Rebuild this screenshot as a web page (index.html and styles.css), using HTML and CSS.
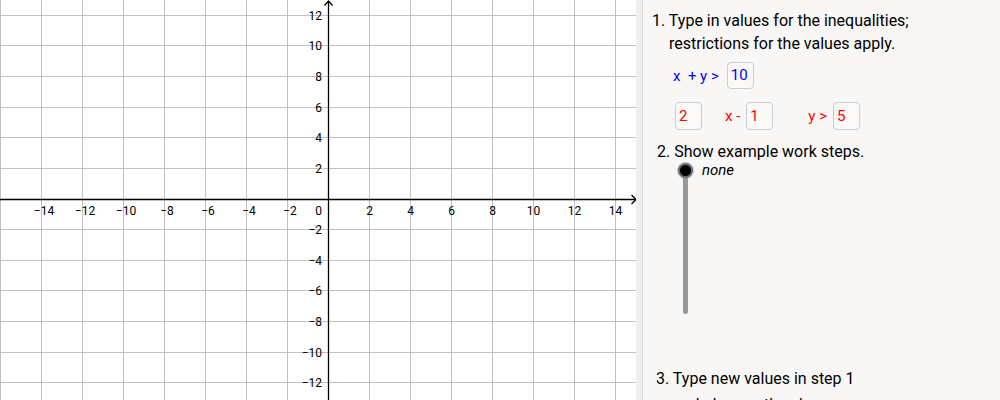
FILE: index.html
```html
<!DOCTYPE html>
<html>
<head>
<meta charset="utf-8">
<link rel="stylesheet" href="styles.css">
</head>
<body>
<div class="app">
  <div class="graph">
    <svg width="636" height="400" viewBox="0 0 636 400" xmlns="http://www.w3.org/2000/svg">
      <g class="grid" stroke="#c0c0c0" stroke-width="1" shape-rendering="crispEdges">
        <line x1="0.5" y1="0" x2="0.5" y2="400"/>
        <line x1="41.5" y1="0" x2="41.5" y2="400"/>
        <line x1="82.5" y1="0" x2="82.5" y2="400"/>
        <line x1="123.5" y1="0" x2="123.5" y2="400"/>
        <line x1="164.5" y1="0" x2="164.5" y2="400"/>
        <line x1="205.5" y1="0" x2="205.5" y2="400"/>
        <line x1="246.5" y1="0" x2="246.5" y2="400"/>
        <line x1="287.5" y1="0" x2="287.5" y2="400"/>
        <line x1="369.5" y1="0" x2="369.5" y2="400"/>
        <line x1="410.5" y1="0" x2="410.5" y2="400"/>
        <line x1="451.5" y1="0" x2="451.5" y2="400"/>
        <line x1="492.5" y1="0" x2="492.5" y2="400"/>
        <line x1="533.5" y1="0" x2="533.5" y2="400"/>
        <line x1="574.5" y1="0" x2="574.5" y2="400"/>
        <line x1="615.5" y1="0" x2="615.5" y2="400"/>
        <line x1="0" y1="15.5" x2="636" y2="15.5"/>
        <line x1="0" y1="45.5" x2="636" y2="45.5"/>
        <line x1="0" y1="76.5" x2="636" y2="76.5"/>
        <line x1="0" y1="107.5" x2="636" y2="107.5"/>
        <line x1="0" y1="137.5" x2="636" y2="137.5"/>
        <line x1="0" y1="168.5" x2="636" y2="168.5"/>
        <line x1="0" y1="229.5" x2="636" y2="229.5"/>
        <line x1="0" y1="260.5" x2="636" y2="260.5"/>
        <line x1="0" y1="290.5" x2="636" y2="290.5"/>
        <line x1="0" y1="321.5" x2="636" y2="321.5"/>
        <line x1="0" y1="352.5" x2="636" y2="352.5"/>
        <line x1="0" y1="382.5" x2="636" y2="382.5"/>
      </g>
      <g class="axes" stroke="#000" stroke-width="1.3" fill="none">
        <line x1="0" y1="199.5" x2="636" y2="199.5"/>
        <line x1="328.5" y1="1" x2="328.5" y2="400"/>
        <path d="M631.5,195 L636,199.5 L631.5,204"/>
        <path d="M324.5,5.5 L328.5,1 L332.5,5.5"/>
      </g>
      <g class="xlabels" text-anchor="middle">
        <text x="44" y="215">−14</text>
        <text x="85" y="215">−12</text>
        <text x="126" y="215">−10</text>
        <text x="167" y="215">−8</text>
        <text x="208" y="215">−6</text>
        <text x="249" y="215">−4</text>
        <text x="290" y="215">−2</text>
        <text x="369.5" y="215">2</text>
        <text x="410.5" y="215">4</text>
        <text x="451.5" y="215">6</text>
        <text x="492.5" y="215">8</text>
        <text x="533.5" y="215">10</text>
        <text x="574.5" y="215">12</text>
        <text x="615.5" y="215">14</text>
      </g>
      <g class="ylabels" text-anchor="end">
        <text x="322" y="215">0</text>
        <text x="322" y="19.8">12</text>
        <text x="322" y="49.8">10</text>
        <text x="322" y="80.8">8</text>
        <text x="322" y="111.8">6</text>
        <text x="322" y="141.8">4</text>
        <text x="322" y="172.8">2</text>
        <text x="322" y="233.8">−2</text>
        <text x="322" y="264.8">−4</text>
        <text x="322" y="294.8">−6</text>
        <text x="322" y="325.8">−8</text>
        <text x="322" y="356.8">−10</text>
        <text x="322" y="386.8">−12</text>
      </g>
    </svg>
  </div>
  <div class="divider"></div>
  <div class="panel">
    <div class="step step1">
      <div class="line">1. Type in values for the inequalities;</div>
      <div class="line indent">restrictions for the values apply.</div>
    </div>
    <div class="row row1">
      <span class="lbl blue">x &nbsp;+ y &gt;</span>
      <span class="box blue">10</span>
    </div>
    <div class="row row2">
      <span class="box red">2</span>
      <span class="lbl red gap-a">x -</span>
      <span class="box red">1</span>
      <span class="lbl red gap-b">y &gt;</span>
      <span class="box red">5</span>
    </div>
    <div class="step step2">
      <div class="line">2. Show example work steps.</div>
    </div>
    <div class="slider">
      <div class="slider-col">
        <div class="handle"></div>
        <div class="track"></div>
      </div>
      <div class="slider-label">none</div>
    </div>
    <div class="step step3">
      <div class="line">3. Type new values in step 1</div>
      <div class="line indent">and observe the changes.</div>
    </div>
  </div>
</div>
</body>
</html>
```
FILE: styles.css
```css
html, body {
  margin: 0;
  padding: 0;
  width: 1000px;
  height: 400px;
  overflow: hidden;
  background: #ffffff;
}

.app {
  display: flex;
  width: 1000px;
  height: 400px;
  font-family: Roboto, "Liberation Sans", sans-serif;
}

.graph {
  width: 636px;
  height: 400px;
  flex: none;
  background: #ffffff;
}

.graph svg {
  display: block;
}

.xlabels text,
.ylabels text {
  font-family: Roboto, "Liberation Sans", sans-serif;
  font-size: 12px;
  fill: #000;
}

.divider {
  width: 6px;
  flex: none;
  background: #eeeeee;
  border-right: 1px solid #d8d8d8;
}

.panel {
  flex: 1;
  background: #f8f7f6;
  padding-top: 9px;
  color: #000;
  font-size: 16px;
}

.line {
  line-height: 23px;
  white-space: nowrap;
}

.step1 {
  padding-left: 9px;
}

.step1 .indent {
  padding-left: 17px;
}

.row {
  display: flex;
  align-items: center;
  font-size: 15px;
}

.row1 {
  margin-top: 7px;
  padding-left: 30px;
  height: 27px;
}

.row2 {
  margin-top: 13px;
  padding-left: 32px;
  height: 28px;
}

.lbl {
  white-space: nowrap;
}

.row1 .lbl {
  margin-right: 8px;
}

.box {
  box-sizing: border-box;
  height: 100%;
  width: 27px;
  border: 1px solid #cccccc;
  border-radius: 4px;
  background: #faf9f8;
  padding-left: 3px;
  display: flex;
  align-items: center;
  line-height: 1;
}

.gap-a {
  margin-left: 23px;
  margin-right: 6px;
}

.gap-b {
  margin-left: 35px;
  margin-right: 6px;
}

.blue { color: #0000ff; }
.red { color: #ff0000; }

.step2 {
  margin-top: 10px;
  padding-left: 14px;
}

.slider {
  display: flex;
  align-items: flex-start;
  padding-left: 35px;
}

.slider-col {
  display: flex;
  flex-direction: column;
  align-items: center;
  width: 15px;
}

.handle {
  position: relative;
  z-index: 1;
  box-sizing: border-box;
  width: 15px;
  height: 15px;
  border-radius: 50%;
  background: #000;
  border: 2.5px solid #6a6a6a;
  box-shadow: 0 0 0 1px rgba(150,150,150,0.5);
}

.track {
  width: 5px;
  height: 143px;
  margin-top: -7px;
  background: #999999;
  border-radius: 2.5px;
}

.slider-label {
  margin-left: 9px;
  font-style: italic;
  font-size: 15px;
  line-height: 15px;
  margin-top: 0px;
}

.step3 {
  margin-top: 53px;
  padding-left: 13px;
}

.step3 .indent {
  padding-left: 17px;
  margin-top: 3px;
}
```
